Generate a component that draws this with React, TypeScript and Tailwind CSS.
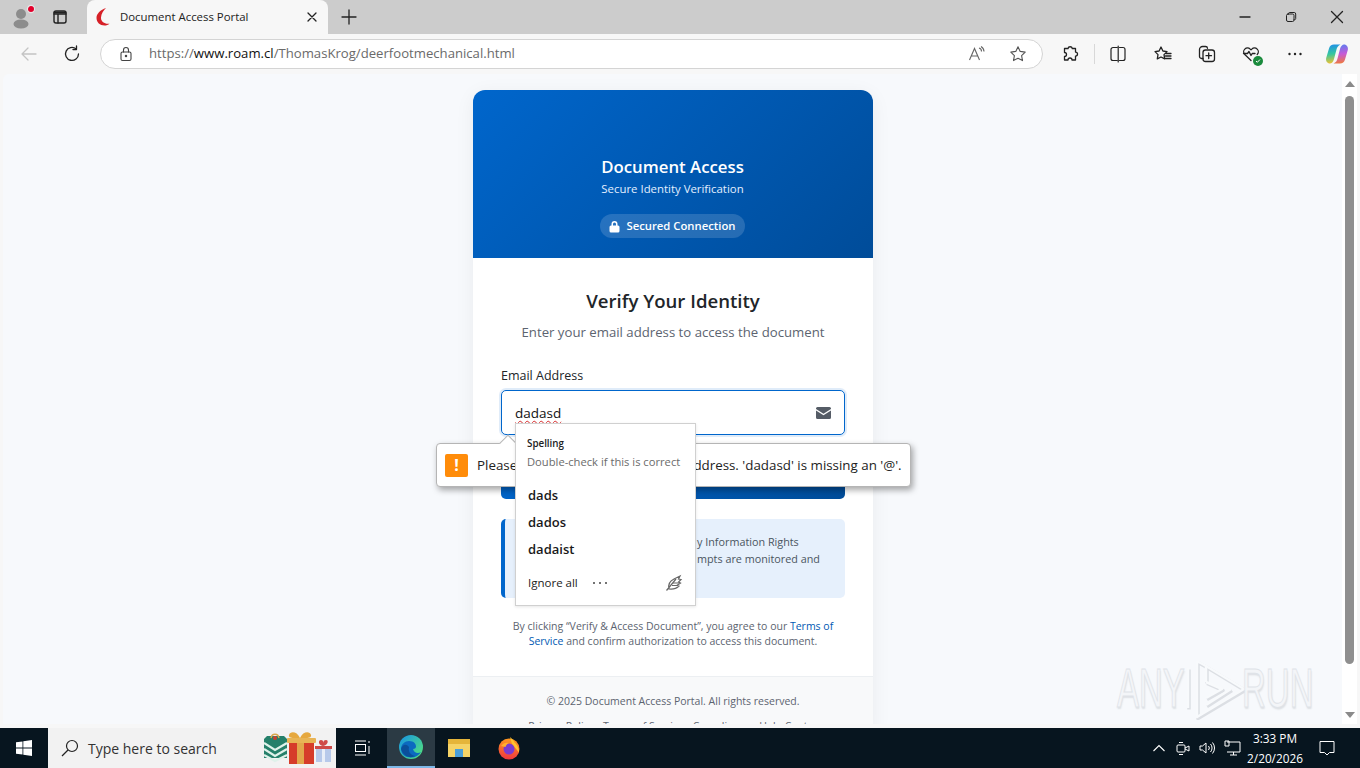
import React from "react";

const ui = { fontFamily: '"Open Sans","Noto Sans",sans-serif' };
const S = { fill: "none", stroke: "#333", strokeWidth: 1.3, strokeLinecap: "round" as const, strokeLinejoin: "round" as const };

function TabStrip() {
  return (
    <div className="flex h-[34px] items-stretch bg-[#cccccc]">
      <div className="relative flex w-[44px] items-center justify-center">
        <svg width="26" height="26" viewBox="0 0 26 26">
          <circle cx="12" cy="10" r="5" fill="#8c8c8c" />
          <ellipse cx="12" cy="20" rx="7.500" ry="4.500" fill="#8c8c8c" />
          <circle cx="22" cy="5" r="3.600" fill="#e3002b" stroke="#e6e6e6" strokeWidth="1.200" />
        </svg>
      </div>
      <div className="flex w-[43px] items-center justify-center pr-[11px]">
        <svg width="16" height="16" viewBox="0 0 16 16" {...S} strokeWidth={1.4} stroke="#222">
          <rect x="2" y="2" width="12" height="12" rx="2" />
          <path d="M2 5h12M6 5v9" />
          <path d="M2.500 3.500h11" strokeWidth={2} />
        </svg>
      </div>
      <div className="mt-0 flex w-[241px] items-center rounded-t-[8px] bg-[#f7f7f7] pl-[7px] pr-[10px]">
        <svg width="18" height="20" viewBox="0 0 18 20" className="shrink-0">
          <path d="M12 1C6.500 3 2.500 6.500 2.500 11c0 4.500 3.500 7.500 8 7.500 2 0 3.700-.6 5-1.800-1 .2-2 .2-3 0C9 16 6.800 13.500 7 10.500 7.200 6.500 9.500 3.500 12 1z" fill="#d62027" />
        </svg>
        <span className="ml-[8px] flex-1 whitespace-nowrap text-[11.4px] text-[#222]" style={ui}>Document Access Portal</span>
        <svg width="12" height="12" viewBox="0 0 12 12" {...S} stroke="#222"><path d="M2 2l8 8M10 2l-8 8" /></svg>
      </div>
      <div className="flex w-[42px] items-center justify-center">
        <svg width="16" height="16" viewBox="0 0 16 16" {...S} stroke="#222"><path d="M8 1v14M1 8h14" /></svg>
      </div>
      <div className="flex-1" />
      <div className="flex items-center">
        <div className="flex w-[46px] justify-center">
          <svg width="12" height="12" viewBox="0 0 12 12" {...S} stroke="#222"><path d="M1 6h10" /></svg>
        </div>
        <div className="flex w-[46px] justify-center">
          <svg width="12" height="12" viewBox="0 0 12 12" {...S} stroke="#222" strokeWidth={1}><rect x="1.500" y="3" width="7.500" height="7.500" rx="1.500" /><path d="M3.500 3V2.500A1.200 1.200 0 0 1 4.700 1.500h4.500a1.500 1.500 0 0 1 1.500 1.500v4.500A1.200 1.200 0 0 1 9 8.700" /></svg>
        </div>
        <div className="flex w-[46px] justify-center">
          <svg width="14" height="14" viewBox="0 0 14 14" {...S} stroke="#222"><path d="M1.500 1.500l11 11M12.500 1.500l-11 11" /></svg>
        </div>
      </div>
    </div>
  );
}

function Toolbar() {
  return (
    <div className="flex h-[40px] items-center bg-[#f7f7f7]">
      <div className="flex w-[56px] justify-center pl-[1px]">
        <svg width="18" height="18" viewBox="0 0 18 18" {...S} stroke="#c4c4c4"><path d="M16 9H2M8 3L2 9l6 6" /></svg>
      </div>
      <div className="flex w-[32px] justify-center">
        <svg width="18" height="18" viewBox="0 0 18 18" {...S} stroke="#222"><path d="M15.500 9A6.500 6.500 0 1 1 13 3.800" /><path d="M13.500 1v3.500H10" /></svg>
      </div>
      <div className="ml-[12px] flex h-[30px] w-[943px] items-center rounded-full border border-[#d4d4d4] bg-white pl-[18px] pr-[14px]">
        <svg width="14" height="16" viewBox="0 0 14 16" {...S} stroke="#444" strokeWidth={1.100}>
          <rect x="2" y="6" width="10" height="8.500" rx="1.500" />
          <path d="M4.500 6V4a2.500 2.500 0 0 1 5 0v2" />
          <circle cx="7" cy="10" r=".7" fill="#444" />
        </svg>
        <span className="ml-[16px] flex-1 whitespace-nowrap text-[13.150px] text-[#6a6a6a]" style={ui}>
          https://<span className="text-[#111]">www.roam.cl</span>/ThomasKrog/deerfootmechanical.html
        </span>
        <svg width="18" height="18" viewBox="0 0 18 18" fill="none" stroke="#666" strokeWidth="1.100" className="mr-[23px]">
          <path d="M1.500 15L6.500 3.500 11.500 15M3.200 11h6.600" />
          <path d="M11 3a3.500 3.500 0 0 1 2.500 3.500M13 1.500a6 6 0 0 1 3 5" />
        </svg>
        <svg width="18" height="18" viewBox="0 0 18 18" {...S} stroke="#555" strokeWidth={1.100} className="mr-[1px]">
          <path d="M9 1.800l2.200 4.600 5 .7-3.600 3.500.9 5L9 13.200l-4.500 2.400.9-5L1.800 7.100l5-.7z" />
        </svg>
      </div>
      <div className="ml-[18px] flex items-center">
        <svg width="18" height="18" viewBox="0 0 18 18" {...S} stroke="#222">
          <path d="M7 3.500a2.200 2.200 0 0 1 4.300 0H14.500v3.600a2 2 0 0 1 0 4V15H11a2 2 0 0 0-4 0H3.500v-3.500a2 2 0 0 0 0-4V3.500z" />
        </svg>
        <div className="ml-[15px] mr-[14px] h-[20px] w-px bg-[#d8d8d8]" />
        <svg width="18" height="18" viewBox="0 0 18 18" {...S} stroke="#222" strokeWidth={1.200}>
          <path d="M8 2.500H4a2 2 0 0 0-2 2v9a2 2 0 0 0 2 2h4M10.500 2.500H14a2 2 0 0 1 2 2v9a2 2 0 0 1-2 2h-3.500M9.200 1v16" />
        </svg>
        <svg width="20" height="18" viewBox="0 0 20 18" {...S} stroke="#222" className="ml-[26px]">
          <path d="M8 2l1.900 4 4.100.6-3 3 .7 4.300L8 12l-3.700 1.900.7-4.300-3-3 4.100-.6zM13 8.500h5M12.500 11h5.500M11.500 13.500h6.500" />
        </svg>
        <svg width="18" height="18" viewBox="0 0 18 18" {...S} stroke="#222" className="ml-[25px]">
          <path d="M5 13.500H3.500a2 2 0 0 1-2-2V4.500a3 3 0 0 1 3-3h3a2 2 0 0 1 2 1.800" />
          <rect x="5" y="5" width="11.500" height="11.500" rx="2.500" />
          <path d="M10.700 8v5.500M8 10.700h5.500" />
        </svg>
        <div className="relative ml-[26px] h-[18px] w-[18px]">
          <svg width="18" height="18" viewBox="0 0 18 18" {...S} stroke="#222">
            <path d="M9 15.500L2.800 9.500a3.800 3.800 0 0 1 5.400-5.400l.8.800.8-.8a3.800 3.800 0 0 1 5.400 5.400" />
            <path d="M1.500 8.500h4l1.500-2 2 4 1.200-2H13" />
          </svg>
          <span className="absolute bottom-[-3px] right-[-3px] flex h-[10px] w-[10px] items-center justify-center rounded-full bg-[#1a8a3c]">
            <svg width="6" height="6" viewBox="0 0 6 6" fill="none" stroke="#fff" strokeWidth="1"><path d="M1 3l1.300 1.300L5 1.500" /></svg>
          </span>
        </div>
        <svg width="18" height="18" viewBox="0 0 18 18" fill="#222" className="ml-[26px]">
          <circle cx="3.500" cy="9" r="1.200" /><circle cx="9" cy="9" r="1.200" /><circle cx="14.500" cy="9" r="1.200" />
        </svg>
        <svg width="24" height="24" viewBox="0 0 24 24" className="ml-[21px]">
          <defs>
            <linearGradient id="cp1" x1="0.300" y1="0" x2="0.400" y2="1"><stop offset="0" stopColor="#1f8fe8" /><stop offset=".5" stopColor="#35c7a0" /><stop offset="1" stopColor="#f2c230" /></linearGradient>
            <linearGradient id="cp2" x1="0.500" y1="0" x2="0.600" y2="1"><stop offset="0" stopColor="#5c7cf0" /><stop offset=".5" stopColor="#c65ad8" /><stop offset="1" stopColor="#f07a3a" /></linearGradient>
          </defs>
          <path d="M9 2.500h6.500c-2.500 1-3.500 3-4 5L9 17c-.7 3-2.500 4.500-4 4.500-2.700 0-4.500-2.500-3.800-5.500L4 6.500C4.700 4 6.500 2.500 9 2.500z" fill="url(#cp1)" />
          <path d="M15 21.500H8.500c2.500-1 3.500-3 4-5L15 7c.7-3 2.500-4.500 4-4.500 2.700 0 4.500 2.500 3.800 5.500L20 17.500c-.7 2.500-2.500 4-5 4z" fill="url(#cp2)" />
        </svg>
      </div>
    </div>
  );
}

function Card() {
  return (
    <div className="mx-auto mt-[16px] w-[400px] shrink-0 overflow-hidden rounded-t-[12px] bg-white shadow-[0_4px_20px_rgba(0,0,0,0.06)]" style={ui}>
      <div className="flex h-[168px] flex-col items-center bg-[linear-gradient(135deg,#0066cc,#004c99)] pr-[1px] pt-[65px] text-white">
        <div className="text-[16.800px] font-semibold leading-[24px]">Document Access</div>
        <div className="mt-[1px] text-[11.400px] leading-[18px] text-[#e3efff]">Secure Identity Verification</div>
        <div className="mt-[16px] flex h-[24px] w-[145px] items-center justify-center gap-[6px] rounded-full bg-white/15 pt-[1px] text-[11.300px] font-semibold">
          <svg width="11" height="13" viewBox="0 0 11 13"><path d="M2.500 5.500V4a3 3 0 0 1 6 0v1.500h.5A1.500 1.500 0 0 1 10.500 7v4A1.500 1.500 0 0 1 9 12.500H2A1.500 1.500 0 0 1 .5 11V7A1.500 1.500 0 0 1 2 5.500zM4 5.500h3V4a1.500 1.500 0 0 0-3 0z" fill="#fff" /></svg>
          Secured Connection
        </div>
      </div>
      <div className="px-[28px] pt-[30px]">
        <div className="text-center text-[18.600px] font-semibold leading-[26px] text-[#212529]">Verify Your Identity</div>
        <div className="mt-[8px] text-center text-[13.200px] leading-[20px] text-[#5c6470]">Enter your email address to access the document</div>
        <div className="mt-[25px] text-[12.500px] font-medium leading-[18px] text-[#212529]">Email Address</div>
        <div className="mt-[5px] flex h-[45px] items-center justify-between rounded-[5px] border border-[#0066cc] bg-white pl-[13px] pr-[13px] shadow-[0_0_0_2px_rgba(0,102,204,0.12)]">
          <span className="text-[13.500px] leading-[20px] text-[#111] underline decoration-wavy decoration-[#d92b2b] decoration-1 underline-offset-2">dadasd</span>
          <svg width="15" height="12" viewBox="0 0 15 12" fill="#555c66">
            <path d="M1.500 0h12A1.500 1.500 0 0 1 15 1.500v.4L7.500 6.700 0 1.900v-.4A1.500 1.500 0 0 1 1.500 0z" />
            <path d="M0 3.500l7.500 4.800L15 3.500v7A1.500 1.500 0 0 1 13.500 12h-12A1.500 1.500 0 0 1 0 10.500z" />
          </svg>
        </div>
        <div className="mt-[20px] h-[44px] rounded-[5px] bg-[linear-gradient(135deg,#0066cc,#004c99)]" />
        <div className="mt-[20px] h-[79px] rounded-[5px] border-l-[4px] border-[#0066cc] bg-[#e6f0fc] pl-[192px] pr-[16px] pt-[14px] text-[10.800px] leading-[17px] text-[#4a5560]">
          <div className="whitespace-nowrap">y Information Rights</div>
          <div className="whitespace-nowrap">mpts are monitored and</div>
        </div>
        <div className="mt-[21px] text-center text-[10.500px] leading-[15px] text-[#5c6470]">
          By clicking “Verify &amp; Access Document”, you agree to our <span className="text-[#0059b3]">Terms of Service</span> and confirm authorization to access this document.
        </div>
      </div>
      <div className="mt-[27px] border-t border-[#eceff2] bg-[#f8f9fa] pt-[17px] text-center text-[10.500px] leading-[15px] text-[#5c6470]">
        <div>© 2025 Document Access Portal. All rights reserved.</div>
        <div className="mt-[10px] flex justify-center gap-[9px]">
          <span>Privacy Policy</span><span>Terms of Service</span><span>Compliance</span><span>Help Center</span>
        </div>
      </div>
    </div>
  );
}

function Taskbar() {
  return (
    <div className="flex h-[40px] items-stretch bg-[#07151f] text-white" style={ui}>
      <div className="flex w-[48px] items-center justify-center">
        <svg width="16" height="16" viewBox="0 0 16 16" fill="#fff"><path d="M0 2.300l6.500-.9v6.200H0zM7.300 1.300L16 0v7.600H7.300zM0 8.400h6.500v6.200L0 13.700zM7.300 8.400H16V16l-8.700-1.200z" /></svg>
      </div>
      <div className="flex w-[288px] items-center bg-[#f2f2f2] pl-[12px]">
        <svg width="20" height="20" viewBox="0 0 20 20" fill="none" stroke="#222" strokeWidth="1.200"><circle cx="12" cy="8" r="5.500" /><path d="M8 12l-6 6" /></svg>
        <span className="ml-[8px] flex-1 text-[14px] text-[#333]">Type here to search</span>
        <svg width="68" height="34" viewBox="0 0 68 34" className="mr-[4px]">
          <path d="M0 8l3-3h17l3 3v19H0z" fill="#25806a" />
          <path d="M0 12l11 7 12-7M0 18l11 7 12-7M0 24l11 6 12-6" fill="none" stroke="#dff2ea" strokeWidth="2.200" />
          <path d="M7 7c1-5 7-5 8 0" fill="none" stroke="#d9a64a" strokeWidth="1.500" />
          <circle cx="11" cy="7" r="2" fill="#c8402f" />
          <rect x="25" y="8" width="25" height="25" fill="#d63c2a" />
          <rect x="33" y="8" width="7" height="25" fill="#e2a64b" />
          <rect x="23" y="7" width="29" height="5" rx="1" fill="#e8b455" />
          <path d="M36 7c-3-7-10-7-11-3s7 3 11 3c4 0 12 1 11-3s-8-4-11 3z" fill="#e6a83e" />
          <rect x="52" y="17" width="15" height="14" fill="#b7c9ea" />
          <rect x="58" y="17" width="3" height="14" fill="#e8eef8" />
          <rect x="51" y="15" width="17" height="3" fill="#cf4a48" />
          <path d="M59 15c-5-1-5-6-2-6s2 3 2 6c0-3 0-6 3-6s2 5-3 6z" fill="#cf4a48" />
        </svg>
      </div>
      <div className="flex w-[51px] items-center justify-center">
        <svg width="18" height="18" viewBox="0 0 18 18" fill="none" stroke="#fff" strokeWidth="1"><rect x="2.500" y="5.500" width="10" height="7" /><path d="M2 2h11M2 16h11M16 2v2M16 7v8" /></svg>
      </div>
      <div className="flex w-[48px] items-center justify-center border-b-[2px] border-[#7db8e8] bg-[#2b3a44]">
        <svg width="26" height="26" viewBox="0 0 26 26">
          <defs>
            <linearGradient id="edg" x1="0.200" y1="0.100" x2="0.900" y2="0.700"><stop offset="0" stopColor="#1f9fd8" /><stop offset="1" stopColor="#4ad88a" /></linearGradient>
          </defs>
          <circle cx="13" cy="13" r="12" fill="url(#edg)" />
          <path d="M3 15c0-5 4-8 8-8 5 0 7 3 7 5.500 0 1.500-1 2.500-3 2.500 1 4 5 5 8 3-2 3.500-5.500 5.500-10 5.500C7 23.500 3 20 3 15z" fill="#0c6ac0" />
          <path d="M11 13c-1 4 1 8 6 9-5 3-12 0-14-7 1-4 5-6 8-2z" fill="#0a4f9a" />
        </svg>
      </div>
      <div className="flex w-[48px] items-center justify-center">
        <svg width="24" height="20" viewBox="0 0 24 20">
          <path d="M1 3h9l2 2h11v14H1z" fill="#f3c94a" />
          <rect x="1" y="1" width="22" height="5" fill="#e5b53a" />
          <rect x="1" y="6" width="22" height="13" fill="#f5d366" />
          <rect x="8" y="11" width="8" height="8" fill="#4a9ed8" />
        </svg>
      </div>
      <div className="flex w-[52px] items-center justify-center">
        <svg width="24" height="24" viewBox="0 0 24 24">
          <defs>
            <linearGradient id="ffx" x1="0.500" y1="0" x2="0.400" y2="1"><stop offset="0" stopColor="#ff9a1f" /><stop offset="1" stopColor="#f0353f" /></linearGradient>
          </defs>
          <circle cx="12" cy="13" r="10.500" fill="url(#ffx)" />
          <path d="M13 1c2.500 2 3.500 3.500 4.500 5.500 3 2.500 5 6.500 4.500 10L15 8z" fill="#ffc22e" />
          <circle cx="12" cy="13" r="5.500" fill="#7a3bd0" />
          <path d="M4 10c2-3 5-4 8-3 -2 1-3 2-3.500 4z" fill="#ffb02e" />
        </svg>
      </div>
      <div className="flex-1" />
      <div className="flex items-center">
        <svg width="14" height="10" viewBox="0 0 14 10" fill="none" stroke="#fff" strokeWidth="1.100"><path d="M1.500 8L7 2.500 12.500 8" /></svg>
        <svg width="18" height="18" viewBox="0 0 18 18" fill="none" stroke="#fff" strokeWidth="1" className="ml-[8px]"><rect x="3" y="6" width="8" height="7" rx="1" /><path d="M11 9l4-2v5l-4-2M5 3.500h4M5 15.500h4" /></svg>
        <svg width="18" height="18" viewBox="0 0 18 18" fill="none" stroke="#fff" strokeWidth="1" className="ml-[6px]"><path d="M2 7v4h2.500L8 14V4L4.500 7zM10.500 7a3 3 0 0 1 0 4M12.500 5a6 6 0 0 1 0 8M14.500 3.500a8.500 8.500 0 0 1 0 11" /></svg>
        <svg width="18" height="18" viewBox="0 0 18 18" fill="none" stroke="#fff" strokeWidth="1" className="ml-[7px]"><path d="M4 3h13v10H4M2 2h4v5H2zM10.500 13v3M7 16h7" /></svg>
        <div className="ml-[4px] flex w-[60px] flex-col items-center text-[11.800px] leading-[20px]">
          <span>3:33 PM</span><span>2/20/2026</span>
        </div>
        <div className="mr-[11px] flex w-[44px] justify-center">
          <svg width="18" height="18" viewBox="0 0 18 18" fill="none" stroke="#fff" strokeWidth="1"><path d="M2 2.500h14v11h-4.500L9 16l-2.500-2.500H2z" /></svg>
        </div>
      </div>
    </div>
  );
}

const wmText = "block whitespace-nowrap text-[55px] leading-[60px] text-[#f3f5f8] [-webkit-text-stroke:1px_#dfe3e8] [text-shadow:1px_2px_2px_#dde0e4]";

export default function App() {
  return (
    <div className="relative h-[768px] w-[1360px] overflow-hidden bg-[#f7f7f7]">
      <TabStrip />
      <Toolbar />
      <div className="flex h-[650px] pl-[3px]">
        <div className="flex min-w-0 flex-1 flex-col overflow-hidden rounded-tl-[6px] bg-[#f7f9fc] pl-[1px]">
          <Card />
        </div>
        <div className="mr-[3px] flex w-[15px] flex-col items-center bg-white">
          <div className="mt-[7px] h-0 w-0 border-x-[5px] border-b-[6px] border-x-transparent border-b-[#8a8a8a]" />
          <div className="mt-[9px] h-[568px] w-[9px] rounded-full bg-[#8f8f8f]" />
          <div className="mt-auto mb-[6px] h-0 w-0 border-x-[5px] border-t-[6px] border-x-transparent border-t-[#8a8a8a]" />
        </div>
      </div>
      <div className="h-[4px] bg-[#f7f7f7]" />
      <Taskbar />

      {/* validation tooltip */}
      <div className="absolute left-[436px] top-[443px] flex h-[44px] w-[475px] items-center rounded-[4px] border border-[#b5b5b5] bg-white pl-[8px] text-[13.350px] text-[#222] shadow-[2px_3px_6px_rgba(0,0,0,0.35)]" style={ui}>
        <span className="flex h-[23px] w-[23px] shrink-0 items-center justify-center rounded-[2px] bg-[#ff8c0a] text-[16px] font-bold text-white">!</span>
        <span className="ml-[9px] whitespace-nowrap">Please include an '@' in the email address. 'dadasd' is missing an '@'.</span>
        <div className="absolute left-[65px] top-[-7px] h-[12px] w-[12px] rotate-45 border-l border-t border-[#b5b5b5] bg-white" />
      </div>

      {/* spelling popup */}
      <div className="absolute left-[515px] top-[423px] h-[183px] w-[181px] border border-[#d0d0d0] bg-white px-[12px] pt-[12px] shadow-[0_1px_3px_rgba(0,0,0,0.1)]" style={ui}>
        <div className="-ml-px text-[9.800px] font-semibold leading-[15px] text-[#222]">Spelling</div>
        <div className="-ml-px mt-[3px] whitespace-nowrap text-[11.200px] leading-[16px] text-[#6b6b6b]">Double-check if this is correct</div>
        <div className="mt-[15px] text-[13px] font-semibold leading-[20px] text-[#1a1a1a]">dads</div>
        <div className="mt-[7px] text-[13px] font-semibold leading-[20px] text-[#1a1a1a]">dados</div>
        <div className="mt-[7px] text-[13px] font-semibold leading-[20px] text-[#1a1a1a]">dadaist</div>
        <div className="mt-[15px] flex items-center">
          <span className="text-[11.500px] leading-[16px] text-[#222]">Ignore all</span>
          <svg width="16" height="4" viewBox="0 0 16 4" fill="#444" className="ml-[14px]"><circle cx="2" cy="2" r="1" /><circle cx="8" cy="2" r="1" /><circle cx="14" cy="2" r="1" /></svg>
          <svg width="18" height="18" viewBox="0 0 18 18" fill="none" stroke="#666" strokeWidth="1.200" className="ml-auto">
            <path d="M1.500 16.500L11 5M4 15c-1-4 1-8 5-10l6-3-1.500 3 2.500.5-2.500 2.500 2 1-3 2 1.500 1c-3 3-6 3.500-10 3z" />
            <path d="M8 9h7M7 11.500h6" />
          </svg>
        </div>
      </div>

      {/* watermark */}
      <div className="absolute left-[1117px] top-[656px] h-[64px] w-[196px]" style={{ fontFamily: '"Liberation Sans",sans-serif' }}>
        <span className={`${wmText} absolute left-0 top-[2px] origin-left scale-x-[0.6]`}>ANY</span>
        <svg width="62" height="64" viewBox="0 0 62 64" fill="none" className="absolute left-[67px] top-0">
          <g stroke="#dcdfe4" strokeWidth="3.500" strokeLinejoin="round" transform="translate(1 1.500)">
            <path d="M4 12v40M13 5v56l47-28L22 10v16M13 5l9 5M22 26l16 7-16 9M22 49l25-16" />
          </g>
          <g stroke="#f8fafc" strokeWidth="2.500" strokeLinejoin="round">
            <path d="M4 12v40M13 5v56l47-28L22 10v16M13 5l9 5M22 26l16 7-16 9M22 49l25-16" />
          </g>
        </svg>
        <span className={`${wmText} absolute left-[125px] top-[2px] origin-left scale-x-[0.6]`}>RUN</span>
      </div>
    </div>
  );
}
